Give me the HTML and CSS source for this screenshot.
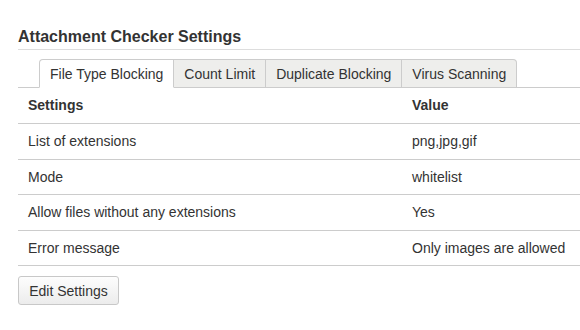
FILE: index.html
```html
<!DOCTYPE html>
<html>
<head>
<meta charset="utf-8">
<link rel="stylesheet" href="styles.css">
</head>
<body>
<div class="page">
  <h2 class="title">Attachment Checker Settings</h2>
  <ul class="tabs">
    <li class="tab active">File Type Blocking</li>
    <li class="tab">Count Limit</li>
    <li class="tab">Duplicate Blocking</li>
    <li class="tab">Virus Scanning</li>
  </ul>
  <table class="settings">
    <thead>
      <tr><th class="col-name">Settings</th><th>Value</th></tr>
    </thead>
    <tbody>
      <tr><td>List of extensions</td><td>png,jpg,gif</td></tr>
      <tr><td>Mode</td><td>whitelist</td></tr>
      <tr><td>Allow files without any extensions</td><td>Yes</td></tr>
      <tr><td>Error message</td><td>Only images are allowed</td></tr>
    </tbody>
  </table>
  <button class="btn">Edit Settings</button>
</div>
</body>
</html>
```
FILE: styles.css
```css
html, body {
  margin: 0;
  padding: 0;
  background: #fff;
  overflow: hidden;
}
.page {
  padding: 0 0 0 18px;
  font-family: "Liberation Sans", Arial, sans-serif;
  color: #333;
  font-size: 14px;
  overflow: hidden;
}
.title {
  margin: 0;
  padding-top: 28px;
  padding-bottom: 3px;
  font-size: 16px;
  font-weight: bold;
  line-height: 18px;
  border-bottom: 1px solid #ddd;
  color: #333;
}
.tabs {
  list-style: none;
  margin: 9px 0 0 0;
  padding: 0 0 0 21px;
  display: flex;
  border-bottom: 1px solid #ccc;
}
.tab {
  height: 27px;
  line-height: 28px;
  padding: 0 10px;
  border-top: 1px solid #ccc;
  border-right: 1px solid #ccc;
  border-bottom: 1px solid #ccc;
  background: #eeeeec;
  margin-bottom: -1px;
}
.tab:first-child {
  border-left: 1px solid #ccc;
}
.tab.active {
  background: #fff;
  border-bottom-color: #fff;
  border-top-left-radius: 4px;
}
.tab:last-child {
  border-top-right-radius: 4px;
}
.settings {
  border-collapse: collapse;
  width: 600px;
}
.settings th, .settings td {
  text-align: left;
  padding: 8px 10px;
  line-height: 18.5px;
  border-bottom: 1px solid #ccc;
}
.settings th {
  font-weight: bold;
  line-height: 19px;
  padding-top: 8px;
  padding-bottom: 8px;
}
.col-name {
  width: 364px;
}
.btn {
  margin-top: 10px;
  width: 101px;
  height: 29px;
  padding: 0;
  font-family: "Liberation Sans", Arial, sans-serif;
  font-size: 14px;
  color: #333;
  border: 1px solid #c8c8c8;
  border-radius: 3px;
  background: linear-gradient(#fdfdfd, #ececec);
}
```
